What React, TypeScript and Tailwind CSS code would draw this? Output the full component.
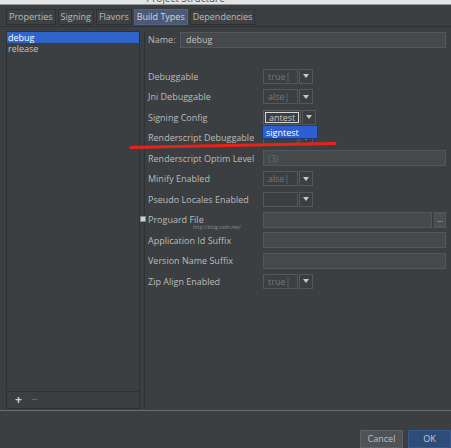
import React from "react";

const font = { fontFamily: '"Open Sans", "DejaVu Sans", sans-serif' };

function Combo({ value, focused }: { value: string; focused?: boolean }) {
  return (
    <div className="flex h-[15px] items-stretch gap-[1px]">
      <div
        className={
          focused
            ? "w-[38px] border border-[#5b5e60] p-[1px] flex"
            : "w-[35px] border border-[#55585a] flex items-center pl-[4px]"
        }
      >
        {focused ? (
          <div className="flex-1 border border-[#d8d8d8] flex items-center pl-[3px] text-[#c8c8c8] leading-none">
            {value}
          </div>
        ) : (
          <span className="text-[#747778] leading-none">{value}</span>
        )}
      </div>
      <div className="w-[14px] border border-[#55585a] flex items-center justify-center">
        <svg width="6" height="4" viewBox="0 0 6 4">
          <path d="M0 0 H6 L3 4 Z" fill="#c9c9c9" />
        </svg>
      </div>
    </div>
  );
}

function Field({ text, right }: { text?: string; right?: boolean }) {
  return (
    <div className="flex h-[16px] flex-1 gap-[2px] mr-[5px]">
      <div className="flex-1 border border-[#545759] bg-[#45494a] flex items-center pl-[4px] text-[#6a6d6e] leading-none">
        {text}
      </div>
      {right && (
        <div className="w-[12px] border border-[#545759] bg-[#4a4e50] flex items-center justify-center text-[#cfcfcf] text-[7px] leading-none">
          ...
        </div>
      )}
    </div>
  );
}

function Row({ label, children, check }: { label: string; children: React.ReactNode; check?: boolean }) {
  return (
    <div className="h-[20.5px] flex items-center">
      <div className="w-[115px] flex items-center relative">
        {check && (
          <div className="absolute left-[-8px] top-[3px] w-[6px] h-[6px] bg-[#d0d0d0] border border-[#888]" />
        )}
        <span>{label}</span>
      </div>
      {children}
    </div>
  );
}

export default function App() {
  return (
    <div
      className="w-[451px] h-[448px] bg-[#3c3f41] flex flex-col overflow-hidden relative text-[#bbbbbb] text-[9px]"
      style={font}
    >
      {/* title bar */}
      <div className="h-[5px] bg-[#e4e4e4] overflow-hidden border-b border-[#9a9a9a] flex justify-center">
        <div className="mt-[-8px] ml-[-80px] text-[10px] text-[#555] leading-[12px]">Project Structure</div>
      </div>

      {/* tabs */}
      <div className="flex pl-[6px] pt-[4px] gap-[2px] h-[22px] border-b border-[#2f3133]">
        {["Properties", "Signing", "Flavors", "Build Types", "Dependencies"].map((t) => (
          <div
            key={t}
            className={
              t === "Build Types"
                ? "h-[16px] px-[2px] flex items-center bg-[#4b5a76] text-[#d3d7de] border border-[#55627c]"
                : "h-[16px] px-[2px] flex items-center border border-[#2e3032] bg-[#3e4143]"
            }
          >
            {t}
          </div>
        ))}
      </div>

      {/* main */}
      <div className="flex-1 flex pt-[4px] pl-[6px] pb-[1px] min-h-0">
        {/* left list */}
        <div className="w-[134px] border border-[#2f3133] flex flex-col">
          <div className="flex-1">
            <div className="h-[11px] bg-[#2f65ca] text-white flex items-center pl-[1px] leading-none">debug</div>
            <div className="h-[11px] flex items-center pl-[1px] leading-none text-[#c4c4c4]">release</div>
          </div>
          <div className="h-[17px] border-t border-[#2f3133] flex items-center pl-[8px] gap-[9px] text-[12px] leading-none">
            <span className="text-[#d0d0d0] font-bold">+</span>
            <span className="text-[#6a6d6e]">−</span>
          </div>
        </div>
        <div className="w-[5px] border-r border-[#2f3133]" />

        {/* right form */}
        <div className="flex-1 flex flex-col pl-[3px]">
          <div className="flex items-center h-[16px] mt-[1px]">
            <span className="w-[32px]">Name:</span>
            <div className="flex-1 mr-[5px] h-[16px] border border-[#545759] bg-[#45494a] flex items-center pl-[5px] text-[#c0c0c0]">
              debug
            </div>
          </div>
          <div className="h-[18px]" />
          <Row label="Debuggable"><Combo value="true|" /></Row>
          <Row label="Jni Debuggable"><Combo value="alse|" /></Row>
          <Row label="Signing Config"><Combo value="antest" focused /></Row>
          <Row label="Renderscript Debuggable"><Combo value="" /></Row>
          <Row label="Renderscript Optim Level"><Field text="(3)" /></Row>
          <Row label="Minify Enabled"><Combo value="alse|" /></Row>
          <Row label="Pseudo Locales Enabled"><Combo value="" /></Row>
          <Row label="Proguard File" check>
            <Field right />
          </Row>
          <Row label="Application Id Suffix"><Field /></Row>
          <Row label="Version Name Suffix"><Field /></Row>
          <Row label="Zip Align Enabled"><Combo value="true|" /></Row>
        </div>
      </div>

      {/* bottom */}
      <div className="h-[38px] border-t border-[#6b6e70] flex items-end justify-end gap-[5px]">
        <div className="w-[43px] h-[18px] bg-[#4f5356] border border-[#5c6063] flex items-center justify-center text-[#bcbcbc]">
          Cancel
        </div>
        <div className="w-[43px] h-[18px] bg-[#2f4b78] border border-[#3a5889] flex items-center justify-center text-[#c8d0dc]">
          OK
        </div>
      </div>

      {/* watermark */}
      <div className="absolute left-[193px] top-[225px] text-[5px] text-[#8a8d8f] leading-none">
        http://blog.csdn.net/
      </div>

      {/* dropdown popup */}
      <div className="absolute left-[262px] top-[125px] w-[56px] h-[14px] bg-[#2e5fd2] border border-[#1d3b7a] flex items-center pl-[3px] text-white leading-none">
        signtest
      </div>

      {/* red annotation line */}
      <svg className="absolute left-0 top-0" width="451" height="448" viewBox="0 0 451 448">
        <path d="M131 147.5 L200 146 L335 143.5" stroke="#e8231b" strokeWidth="3" fill="none" strokeLinecap="round" />
      </svg>
    </div>
  );
}
